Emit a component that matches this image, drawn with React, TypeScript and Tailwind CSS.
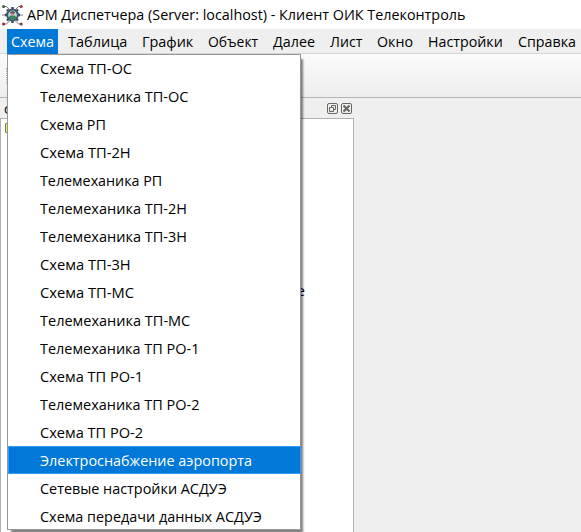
import { useLayoutEffect, useRef } from 'react';

const bar: [string, number][] = [
  ['Схема', 43], ['Таблица', 59], ['График', 51], ['Объект', 50], ['Далее', 42],
  ['Лист', 32], ['Окно', 36], ['Настройки', 75], ['Справка', 58],
];

const items: [string, number][] = [
  ['Схема ТП-ОС', 92], ['Телемеханика ТП-ОС', 148], ['Схема РП', 66], ['Схема ТП-2Н', 91],
  ['Телемеханика РП', 122], ['Телемеханика ТП-2Н', 147], ['Телемеханика ТП-3Н', 147],
  ['Схема ТП-3Н', 91], ['Схема ТП-МС', 94], ['Телемеханика ТП-МС', 150],
  ['Телемеханика ТП РО-1', 159], ['Схема ТП РО-1', 103], ['Телемеханика ТП РО-2', 159],
  ['Схема ТП РО-2', 103], ['Электроснабжение аэропорта', 212],
  ['Сетевые настройки АСДУЭ', 187], ['Схема передачи данных АСДУЭ', 222],
];

// Label condensed so that it takes up exactly the given width.
function Label({ text, width }: { text: string; width: number }) {
  const ref = useRef<HTMLSpanElement>(null);
  useLayoutEffect(() => {
    const el = ref.current;
    if (!el) return;
    el.style.transform = `scaleX(${width / el.offsetWidth})`;
  }, [text, width]);
  return <span ref={ref} className="inline-block origin-left whitespace-pre">{text}</span>;
}

function AppIcon() {
  return (
    <svg className="h-[22px] w-[21px]" viewBox="0 0 21 22" fill="none">
      <path d="M1 2.5h3.5L8 6M20 2.5h-3.5L13 6M1 20h3.5L8 16.500M20 20h-3.500L13 16.500M0 11h3M18 11h3" stroke="#777b80" />
      <path d="M10.500 3v3M10.500 16v3M3 11h3M15 11h3M5 5.500l2 2M14 14.500l2 2M16 5.500l-2 2M7 14.500l-2 2" stroke="#39454f" strokeWidth="2.400" />
      <circle cx="10.500" cy="11" r="5.400" fill="#b5dce5" stroke="#3d596d" strokeWidth="2" />
      <path d="M6.500 14c.5-2.200 2-2.800 4-2.800s3.500.6 4 2.800c-2 2-6 2-8 0Z" fill="#3f8464" />
      <circle cx="10.500" cy="9.800" r="2" fill="#c98d72" />
      <path d="M8 9.200c0-3 5-3 5 0Z" fill="#5e575a" />
      <circle cx="1.600" cy="2.500" r="1.600" fill="#48643f" />
      <circle cx="19.200" cy="2.500" r="1.600" fill="#a43c42" />
      <circle cx="1.600" cy="20" r="1.600" fill="#94323a" />
      <circle cx="19.200" cy="20" r="1.600" fill="#724b37" />
    </svg>
  );
}

export default function App() {
  return (
    <div className="relative flex h-[532px] w-[581px] flex-col overflow-hidden bg-[#efefef] font-['Open_Sans','Noto_Sans',sans-serif] text-[15px] text-black">
      <header className="flex h-[29px] shrink-0 items-center bg-white pl-[2px]">
        <AppIcon />
        <span className="ml-[4px] leading-[29px]"><Label text="АРМ Диспетчера (Server: localhost) - Клиент ОИК Телеконтроль" width={438} /></span>
      </header>
      <nav className="flex h-[25px] shrink-0 border-b border-[#d5d5d5] pl-[7px]">
        {bar.map(([text, width], i) => (
          <div
            key={text}
            className={`flex h-[25px] shrink-0 items-center ${i === 0 ? 'bg-[#0078d7] pl-[4px] text-white' : 'pl-[3px]'}`}
            style={{ width: width + (i === 0 ? 8 : 15), marginLeft: i === 1 ? 7 : 0 }}
          >
            <Label text={text} width={width} />
          </div>
        ))}
      </nav>
      <div className="flex h-[44px] shrink-0 items-center border-b border-[#b5b5b5] bg-linear-to-b from-[#fbfbfb] to-[#eeeeee] pl-[6px]">
        <div className="h-[16px] border-l border-dotted border-[#bbb]" />
      </div>
      <section className="flex w-[354px] grow flex-col">
        <div className="flex h-[20px] items-center justify-between pr-[2px] pl-[4px]">
          <span className="text-[14px]">с</span>
          <div className="flex gap-[3px]">
            <svg className="h-[11px] w-[11px]" viewBox="0 0 11 11" fill="none" stroke="#686863">
              <rect x=".5" y=".5" width="10" height="10" rx="1.5" />
              <path d="M4.5 4V2.5h4v4H7M2.5 4.5h4v4h-4Z" />
            </svg>
            <svg className="h-[11px] w-[11px]" viewBox="0 0 11 11" fill="none" stroke="#686863">
              <rect x=".5" y=".5" width="10" height="10" rx="1.5" />
              <path d="m2.5 2.5 6 6M8.5 2.5l-6 6" strokeWidth="2.2" />
            </svg>
          </div>
        </div>
        <div className="flex grow items-start justify-between border border-b-0 border-[#b0b0b0] bg-white">
          <div className="mt-[4px] ml-[4px] h-[10px] w-[9px] rounded-[1px] border border-[#777] bg-[#f2ed20]" />
          <span className="mt-[161px] mr-[48px] leading-[20px]">е</span>
        </div>
      </section>
      <div className="absolute top-[54px] left-[7px] h-[476px] w-[294px] bg-white shadow-[3px_4px_2px_-1px_#00000080]">
        <div className="pointer-events-none absolute inset-0 border border-[#979797]" />
        <ul className="relative">
          {items.map(([text, width], i) => (
            <li
              key={text}
              className={`ml-px flex h-[28px] items-center ${i === 14 ? 'border border-[#3399ff] bg-[#0078d7] pl-[31px] text-white' : 'pl-[32px]'}`}
            >
              <Label text={text} width={width} />
            </li>
          ))}
        </ul>
      </div>
    </div>
  );
}
